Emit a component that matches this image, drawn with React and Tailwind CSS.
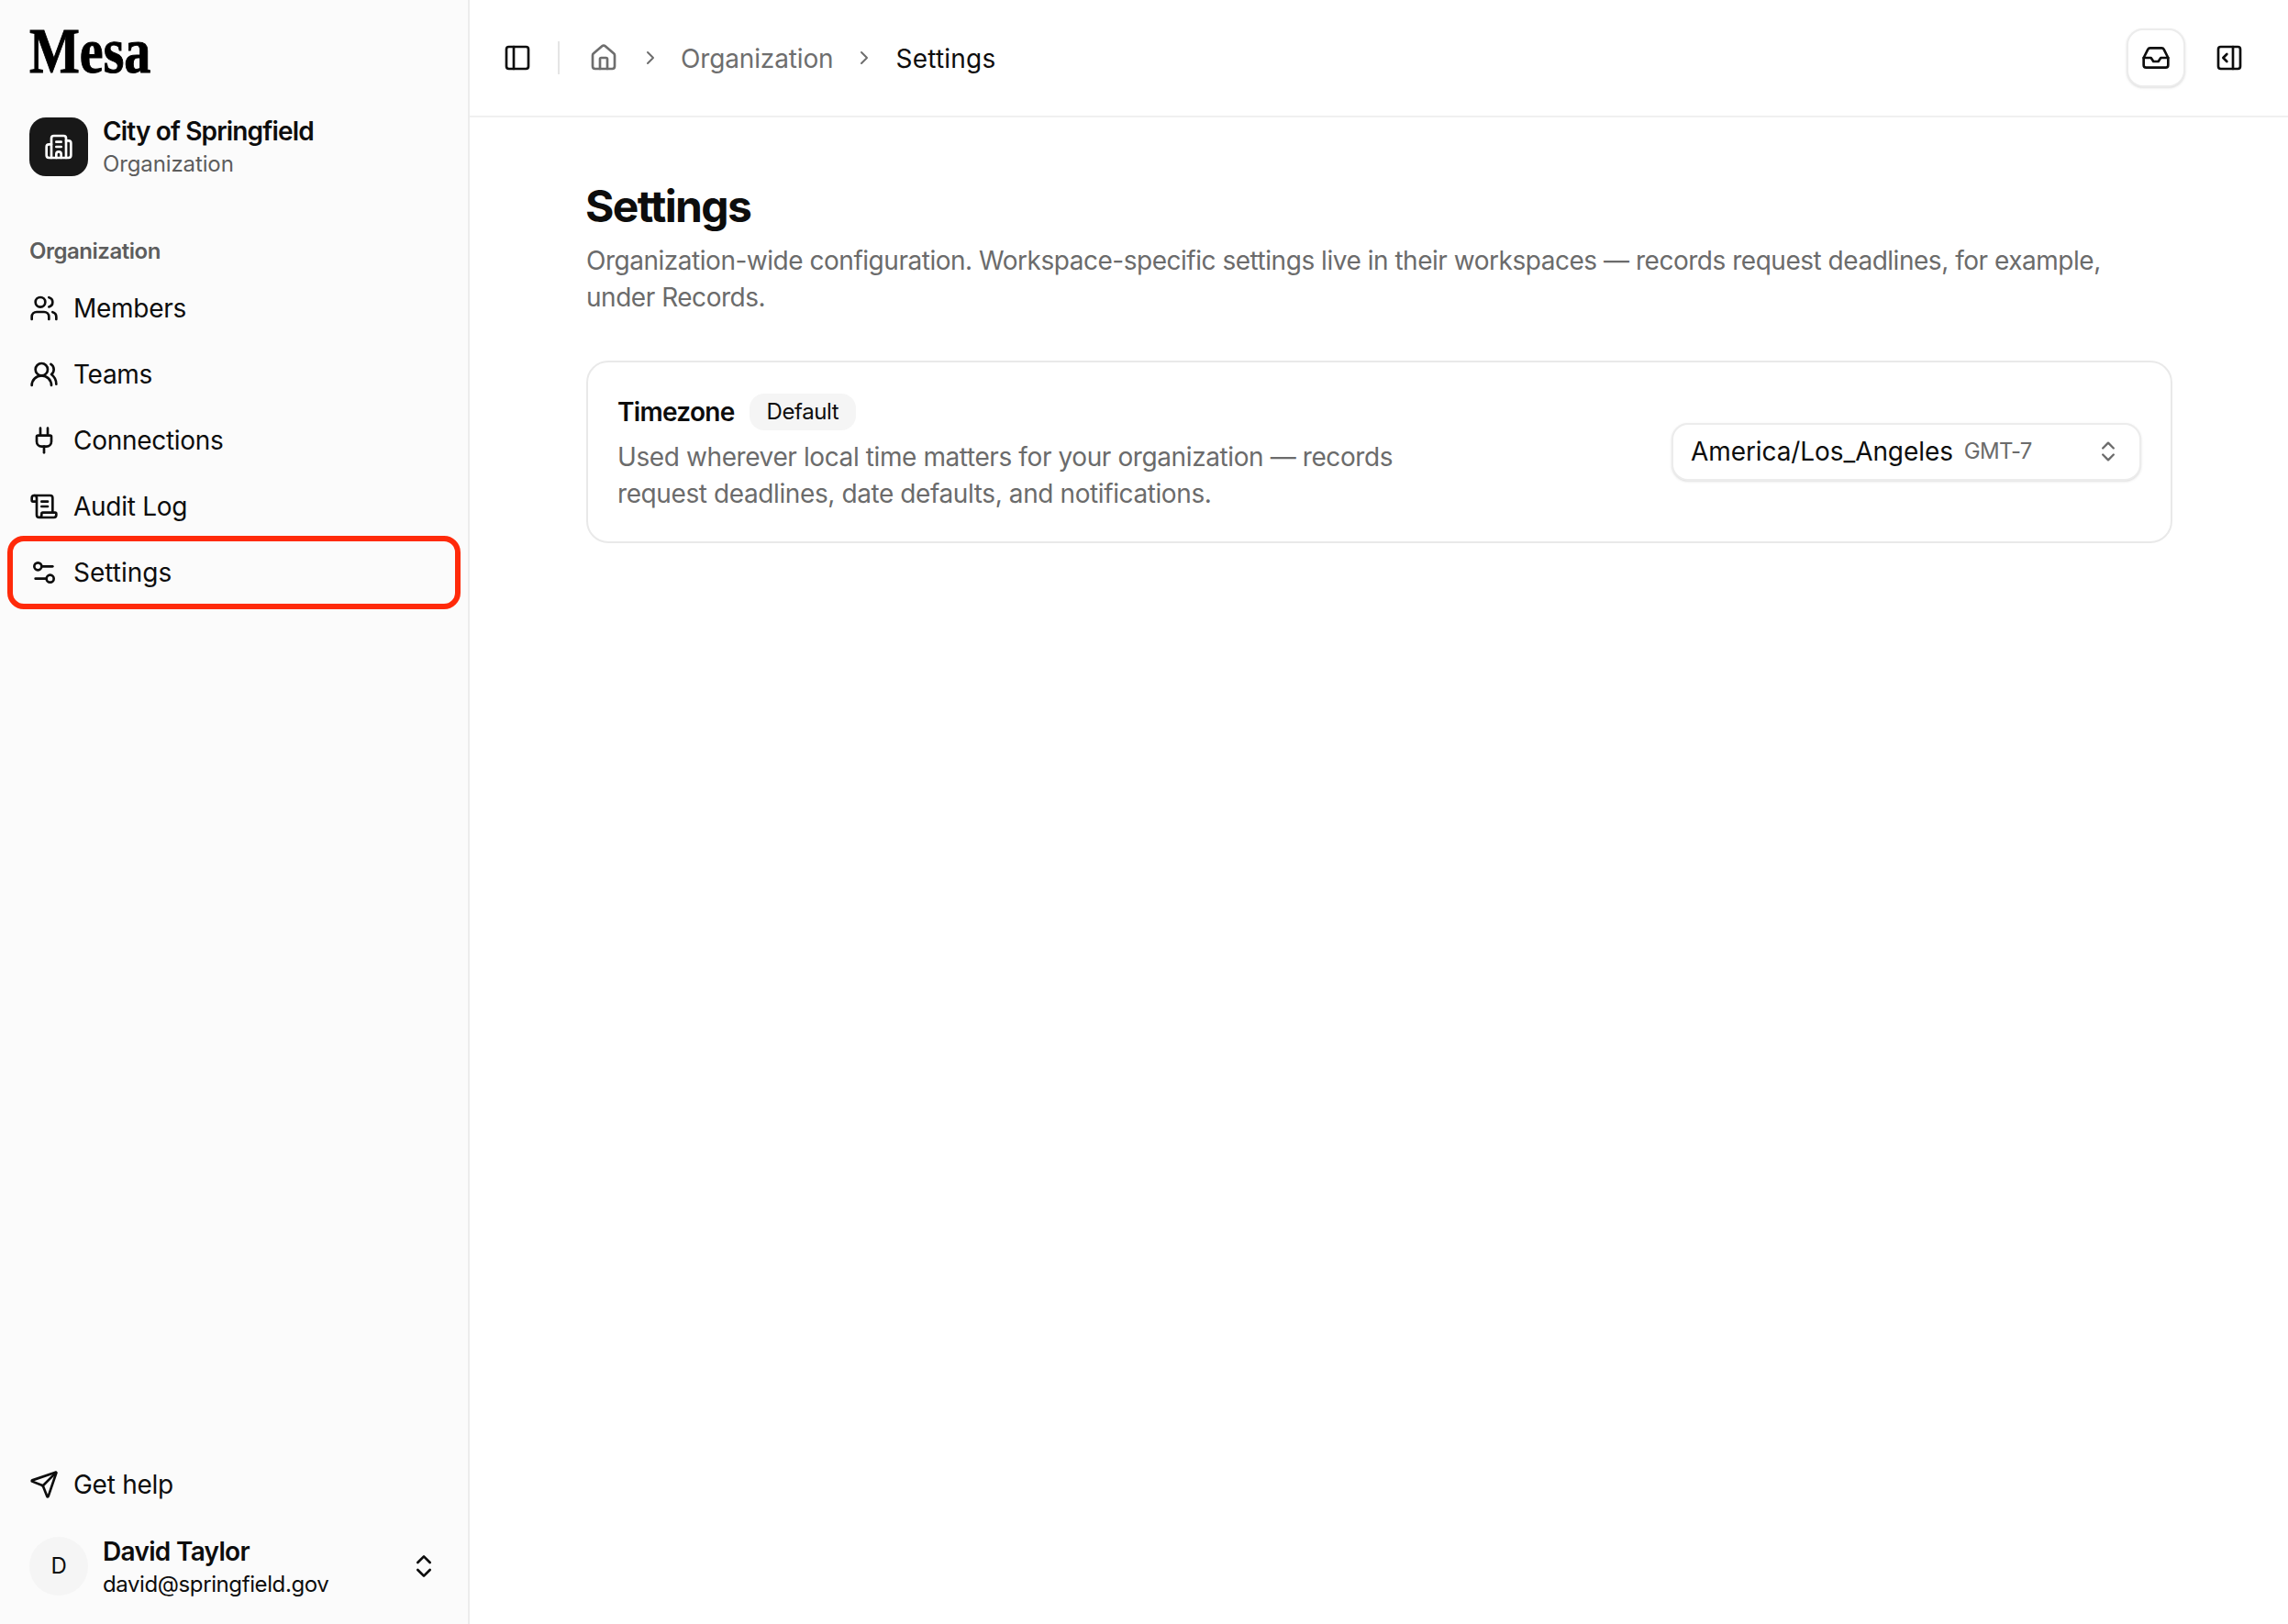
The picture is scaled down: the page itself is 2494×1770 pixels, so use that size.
import React from "react";
import { Users, UsersRound, Plug, ScrollText, Settings2, Send, ChevronsUpDown, PanelLeft, House, ChevronRight, Inbox, PanelRightOpen, Building2 } from "lucide-react";

const items = [
  ["Members", Users],
  ["Teams", UsersRound],
  ["Connections", Plug],
  ["Audit Log", ScrollText],
];

function NavItem({ label, Icon, marked, track = "tracking-[-0.01em]" }) {
  return (
    <a className={"relative flex h-16 items-center gap-4 rounded-2xl px-4 text-[28px] leading-10 text-[#0d0d0d] " + track}>
      <Icon size={32} strokeWidth={2} className="shrink-0" />
      <span>{label}</span>
      {marked && <span className="absolute -inset-2 rounded-[18px] border-[6px] border-[#ff2a0a]" />}
    </a>
  );
}

export default function App() {
  return (
    <div className="flex h-screen w-full overflow-hidden bg-white font-['Inter',sans-serif] tracking-[-0.025em] text-[#0d0d0d]">
      <aside className="flex w-[512px] shrink-0 flex-col border-r-2 border-[#ececec] bg-[#fbfbfb] px-4 pb-[25px]">
        <div className="mt-6 flex h-16 items-center px-4">
          <span className="origin-left scale-x-[0.83] font-['Liberation_Serif',serif] text-[70px] font-bold leading-none tracking-normal text-black [-webkit-text-stroke:1px_black]">Mesa</span>
        </div>
        <div className="mt-[34px] flex items-center gap-4 px-4">
          <div className="flex h-16 w-16 items-center justify-center rounded-[18px] bg-[#181818] text-white">
            <Building2 size={32} strokeWidth={2} />
          </div>
          <div className="pt-[3px]">
            <div className="text-[28px] font-semibold leading-9 tracking-[-0.03em]">City of Springfield</div>
            <div className="text-2xl leading-9 tracking-[-0.005em] text-[#5d5d5d]">Organization</div>
          </div>
        </div>
        <div className="mt-[57px] flex h-10 items-center px-4 text-2xl font-semibold tracking-[-0.02em] text-[#5d5d5d]">Organization</div>
        <nav className="mt-[10px] flex flex-col gap-2">
          {items.map(([label, Icon]) => (
            <NavItem key={label} label={label} Icon={Icon} />
          ))}
          <NavItem label="Settings" Icon={Settings2} marked track="tracking-normal" />
        </nav>
        <div className="mt-auto">
          <NavItem label="Get help" Icon={Send} />
          <div className="mt-[18px] flex items-center gap-4 px-4">
            <div className="flex h-16 w-16 items-center justify-center rounded-full bg-[#f5f5f5] text-2xl">D</div>
            <div className="flex-1 pt-[5px]">
              <div className="text-[28px] font-semibold leading-9 tracking-[-0.025em]">David Taylor</div>
              <div className="text-2xl leading-9">david@springfield.gov</div>
            </div>
            <ChevronsUpDown size={32} strokeWidth={2} />
          </div>
        </div>
      </aside>
      <div className="flex min-w-0 flex-1 flex-col">
        <header className="flex h-32 items-center border-b-2 border-[#f0f0f0] pl-9 pr-8">
          <PanelLeft size={32} strokeWidth={2} />
          <div className="ml-[28px] h-9 w-0.5 bg-[#e5e5e5]" />
          <House size={32} strokeWidth={2} className="ml-8 text-[#6e6e6e]" />
          <ChevronRight size={24} strokeWidth={2} className="ml-[23px] text-[#6e6e6e]" />
          <span className="ml-[21px] pt-[2px] text-[28px] tracking-[-0.005em] text-[#6e6e6e]">Organization</span>
          <ChevronRight size={24} strokeWidth={2} className="ml-[22px] text-[#6e6e6e]" />
          <span className="ml-[22px] pt-[2px] text-[28px] tracking-[0.008em]">Settings</span>
          <div className="ml-auto flex h-16 w-16 items-center justify-center rounded-[18px] border-2 border-[#ececec] bg-white shadow-sm">
            <Inbox size={32} strokeWidth={2} />
          </div>
          <div className="ml-4 flex h-16 w-16 items-center justify-center">
            <PanelRightOpen size={32} strokeWidth={2} />
          </div>
        </header>
        <main className="flex-1 pl-[127px] pr-[126px] pt-[65px]">
          <h1 className="-ml-px text-5xl font-bold leading-16 tracking-[-0.035em]">Settings</h1>
          <p className="mt-[7px] text-[28px] leading-10 tracking-[-0.017em] text-[#6b6b6b]">
            Organization-wide configuration. Workspace-specific settings live in their workspaces — records request deadlines, for example, under Records.
          </p>
          <section className="mt-[49px] flex items-center justify-between rounded-3xl border-2 border-[#e9e9e9] px-8 pb-8 pt-[33px]">
            <div>
              <div className="flex items-center gap-4">
                <span className="text-[28px] font-semibold tracking-[-0.025em]">Timezone</span>
                <span className="flex h-10 items-center rounded-2xl bg-[#f5f5f5] px-[19px] text-2xl">Default</span>
              </div>
              <p className="mt-2 max-w-[900px] text-[28px] leading-10 text-[#6b6b6b]">
                Used wherever local time matters for your organization — records request deadlines, date defaults, and notifications.
              </p>
            </div>
            <div className="mb-[2px] flex h-[63px] w-[512px] items-center rounded-[18px] border-2 border-[#ececec] bg-white pl-[19px] pr-5 shadow-sm">
              <span className="text-[28px] tracking-[-0.003em]">America/Los_Angeles</span>
              <span className="ml-3 text-2xl tracking-[-0.03em] text-[#6b6b6b]">GMT-7</span>
              <ChevronsUpDown size={28} strokeWidth={2} className="ml-auto text-[#6b6b6b]" />
            </div>
          </section>
        </main>
      </div>
    </div>
  );
}
